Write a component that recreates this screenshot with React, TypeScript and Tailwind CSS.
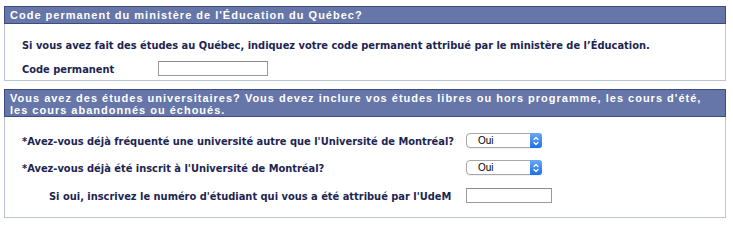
import React from 'react'

const labelClass = "text-[9.9px] leading-[13px] font-bold text-[#1c2552] whitespace-nowrap"

function MacSelect({ value }: { value: string }) {
  return (
    <div className="flex h-[15px] w-[76px] rounded-[4px] border border-[#a7a7a7] bg-white shadow-[0_1px_0_rgba(0,0,0,0.05)]">
      <div className="flex-1 pl-[11px] text-[10px] leading-[13px] text-black font-['Liberation_Sans',sans-serif]">{value}</div>
      <div className="flex w-[12px] items-center justify-center rounded-r-[3px] bg-gradient-to-b from-[#6aa8f7] to-[#1b6ee6] -my-[1px] -mr-[1px]">
        <svg width="6" height="10" viewBox="0 0 6 10" fill="none" stroke="white" strokeWidth="1.2" strokeLinecap="round" strokeLinejoin="round">
          <path d="M1 3.5 L3 1.5 L5 3.5" />
          <path d="M1 6.5 L3 8.5 L5 6.5" />
        </svg>
      </div>
    </div>
  )
}

function TextBox({ width }: { width: string }) {
  return <div className={`h-[15px] ${width} border border-[#9a9a9a] border-t-[#8a8a8a] bg-white`} />
}

function PanelHeader({ children, height }: { children: React.ReactNode; height: string }) {
  return (
    <div
      className={`${height} border border-[#3e4b7c] bg-[#6776a9] pl-[5px] pt-[2px] text-[11px] leading-[12px] font-bold tracking-[1px] text-white whitespace-nowrap font-['Liberation_Sans',Arial,sans-serif]`}
    >
      {children}
    </div>
  )
}

export default function App() {
  return (
    <div className="h-[227px] w-[733px] bg-white pl-[4px] pt-[6px] font-['DejaVu_Sans',Verdana,sans-serif]">
      <div className="w-[722px]">
        <PanelHeader height="h-[18px]">Code permanent du ministère de l'Éducation du Québec?</PanelHeader>
        <div className="h-[57px] border-x border-b border-[#bcc3d6] pl-[17px] pt-[15px]">
          <p className={labelClass}>
            Si vous avez fait des études au Québec, indiquez votre code permanent attribué par le ministère de l’Éducation.
          </p>
          <div className="mt-[8px] flex items-center">
            <span className={`${labelClass} w-[136px] pt-[3px]`}>Code permanent</span>
            <TextBox width="w-[110px]" />
          </div>
        </div>
      </div>

      <div className="mt-[8px] w-[722px]">
        <PanelHeader height="h-[28px]">
          Vous avez des études universitaires? Vous devez inclure vos études libres ou hors programme, les cours d'été,
          <br />
          les cours abandonnés ou échoués.
        </PanelHeader>
        <div className="h-[101px] border-x border-b border-[#bcc3d6] pl-[17px] pt-[16px]">
          <div className="flex h-[15px] items-center">
            <span className={`${labelClass} w-[444px] pt-[2px]`}>
              *Avez-vous déjà fréquenté une université autre que l'Université de Montréal?
            </span>
            <MacSelect value="Oui" />
          </div>
          <div className="mt-[12px] flex h-[15px] items-center">
            <span className={`${labelClass} w-[444px] pt-[2px]`}>*Avez-vous déjà été inscrit à l'Université de Montréal?</span>
            <MacSelect value="Oui" />
          </div>
          <div className="mt-[13px] flex h-[15px] items-center">
            <span className={`${labelClass} w-[444px] pl-[27px] pt-[2px]`}>
              Si oui, inscrivez le numéro d'étudiant qui vous a été attribué par l'UdeM
            </span>
            <TextBox width="w-[86px]" />
          </div>
        </div>
      </div>
    </div>
  )
}
